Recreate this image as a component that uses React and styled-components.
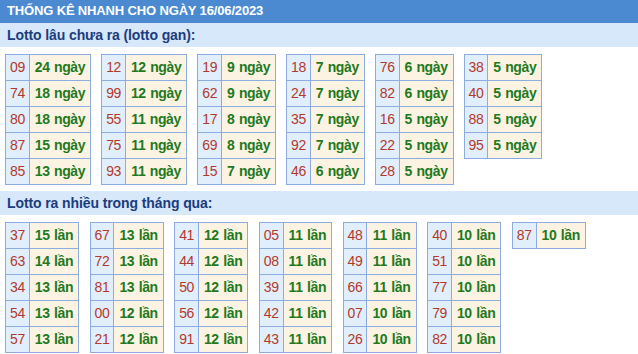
import React from "react"
import styled, {createGlobalStyle} from "styled-components"

const ganData = [
  [["09", 24], ["74", 18], ["80", 18], ["87", 15], ["85", 13]],
  [["12", 12], ["99", 12], ["55", 11], ["75", 11], ["93", 11]],
  [["19", 9], ["62", 9], ["17", 8], ["69", 8], ["15", 7]],
  [["18", 7], ["24", 7], ["35", 7], ["92", 7], ["46", 6]],
  [["76", 6], ["82", 6], ["16", 5], ["22", 5], ["28", 5]],
  [["38", 5], ["40", 5], ["88", 5], ["95", 5]],
]

const hotData = [
  [["37", 15], ["63", 14], ["34", 13], ["54", 13], ["57", 13]],
  [["67", 13], ["72", 13], ["81", 13], ["00", 12], ["21", 12]],
  [["41", 12], ["44", 12], ["50", 12], ["56", 12], ["91", 12]],
  [["05", 11], ["08", 11], ["39", 11], ["42", 11], ["43", 11]],
  [["48", 11], ["49", 11], ["66", 11], ["07", 10], ["26", 10]],
  [["40", 10], ["51", 10], ["77", 10], ["79", 10], ["82", 10]],
  [["87", 10]],
]

const App = () => (
  <Page>
    <GlobalStyle />
    <TopBar>THỐNG KÊ NHANH CHO NGÀY 16/06/2023</TopBar>
    <SubBar>Lotto lâu chưa ra (lotto gan):</SubBar>
    <TableRow gap={10}>
      {ganData.map((list, i) => (
        <StatTable key={i} rows={list} unit="ngày" />
      ))}
    </TableRow>
    <SubBar>Lotto ra nhiều trong tháng qua:</SubBar>
    <TableRow gap={10.5}>
      {hotData.map((list, i) => (
        <StatTable key={i} rows={list} unit="lần" />
      ))}
    </TableRow>
  </Page>
)

const StatTable = ({rows, unit}) => (
  <Grid>
    {rows.map(([num, count]) => (
      <React.Fragment key={num}>
        <NumCell>{num}</NumCell>
        <CountCell>
          {count} {unit}
        </CountCell>
      </React.Fragment>
    ))}
  </Grid>
)

const GlobalStyle = createGlobalStyle`
  body {
    margin: 0;
    background: #fff;
    font-family: "Liberation Sans", Arial, sans-serif;
  }
`

const Page = styled.div`
  width: 638px;
  height: 354px;
  overflow: hidden;
  background: #fff;
`

const TopBar = styled.div`
  height: 23px;
  line-height: 22px;
  padding-left: 7px;
  background: #4b8ad1;
  color: #fff;
  font-size: 13px;
  font-weight: bold;
  letter-spacing: -0.15px;
`

const SubBar = styled.div`
  height: 24px;
  line-height: 24px;
  padding-left: 7px;
  background: #d6e8fa;
  color: #1c3c7c;
  font-size: 14px;
  font-weight: bold;
  letter-spacing: -0.1px;
`

const TableRow = styled.div`
  display: flex;
  align-items: flex-start;
  gap: ${(props) => props.gap}px;
  padding: 7px 5px 6px;
`

const Grid = styled.div`
  display: inline-grid;
  grid-template-columns: auto auto;
  gap: 1px;
  background: #8dacdf;
  border: 1px solid #8dacdf;
`

const Cell = styled.div`
  height: 25px;
  line-height: 25px;
  font-size: 14px;
  letter-spacing: -0.4px;
  word-spacing: 1px;
  text-align: center;
  white-space: nowrap;
`

const NumCell = styled(Cell)`
  padding: 0 4px;
  background: #e1eefc;
  color: #b23a2c;
`

const CountCell = styled(Cell)`
  padding: 0 5px;
  background: #fdf3e3;
  color: #1f7a1f;
  font-weight: bold;
`

export default App
